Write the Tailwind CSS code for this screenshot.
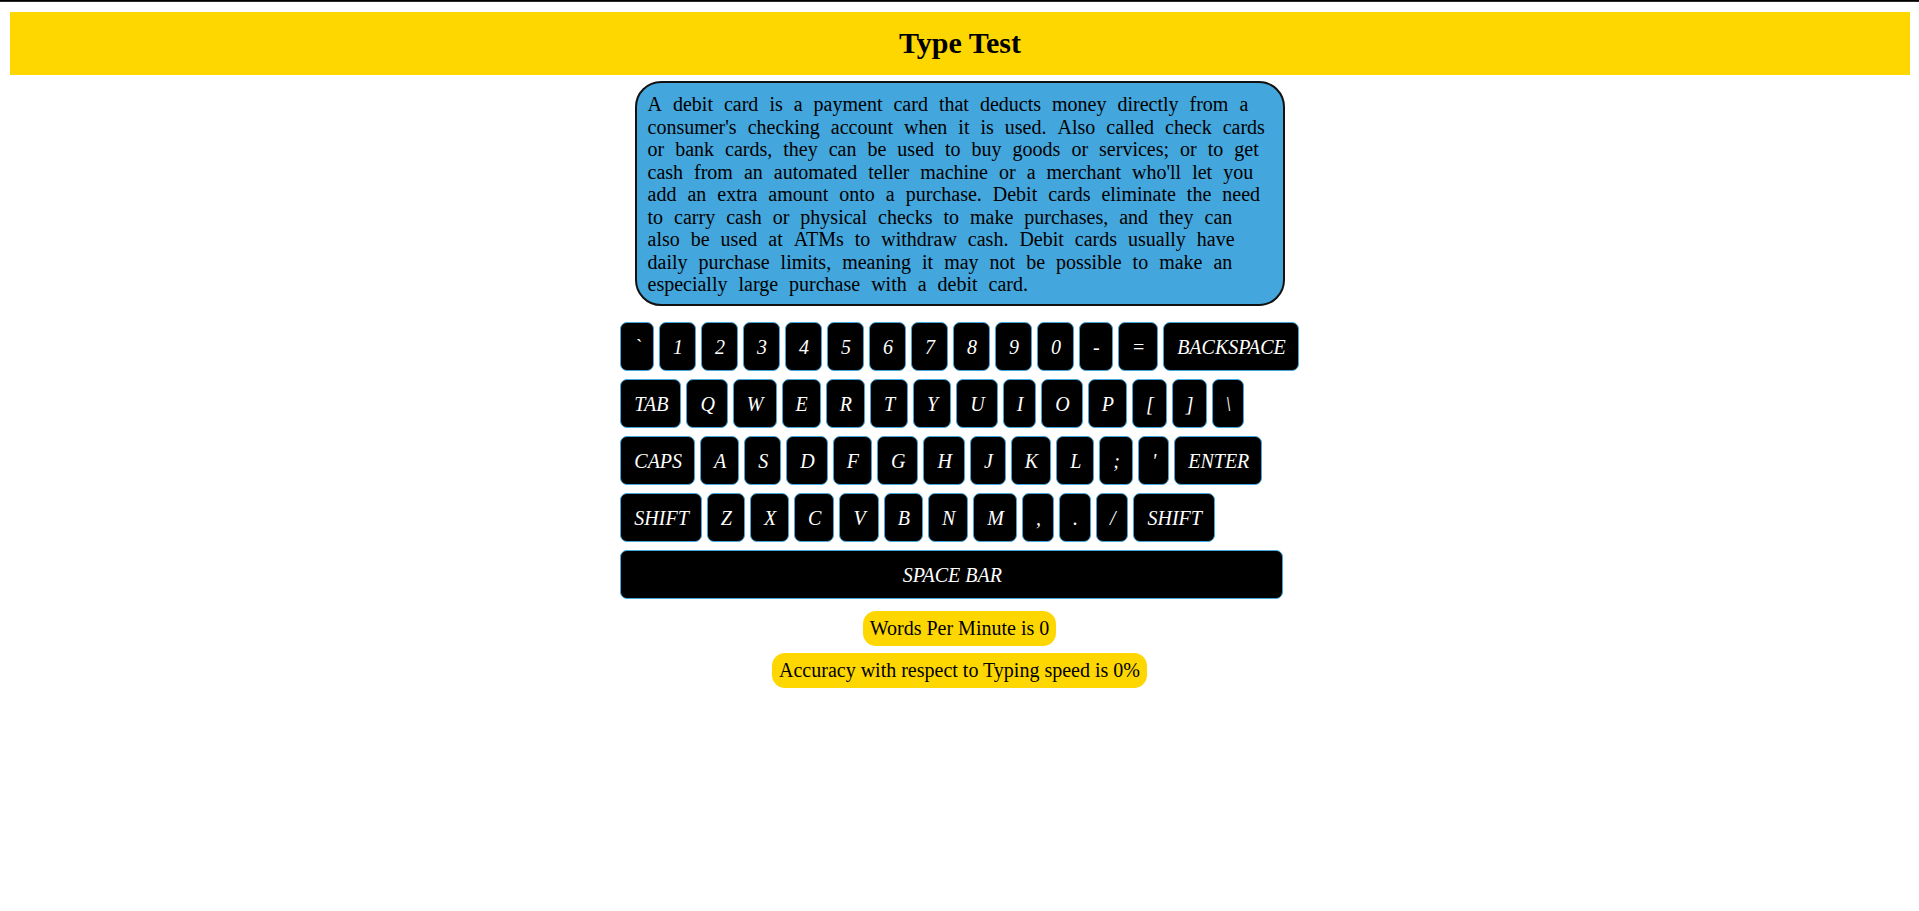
<!DOCTYPE html>
<html lang="en">
<head>
<meta charset="utf-8">
<meta name="viewport" content="width=device-width, initial-scale=1">
<title>Type Test</title>
<script src="https://cdn.jsdelivr.net/npm/@tailwindcss/browser@4"></script>
</head>
<body class="bg-white text-black font-['Liberation_Serif',serif] text-[20px] leading-[23px]">
<div class="h-0.5 border-b border-[#2b2629] bg-black"></div>
<header class="mt-[10px] mr-[9px] ml-[10px] bg-[#ffd700] pt-[13px] pb-[15px]">
  <h1 class="text-center text-[30px] leading-[35px] font-bold">Type Test</h1>
</header>
<main class="flex flex-col items-center">
  <p id="passage" class="mt-[6px] flex min-h-[225px] w-full max-w-[650px] flex-wrap content-between gap-x-[11px] rounded-[26px] border-2 border-[#111111] bg-[#43a6dc] pt-[10px] pr-[9px] pb-[9px] pl-[11px] leading-[22px]">A debit card is a payment card that deducts money directly from a consumer's checking account when it is used. Also called check cards or bank cards, they can be used to buy goods or services; or to get cash from an automated teller machine or a merchant who'll let you add an extra amount onto a purchase. Debit cards eliminate the need to carry cash or physical checks to make purchases, and they can also be used at ATMs to withdraw cash. Debit cards usually have daily purchase limits, meaning it may not be possible to make an especially large purchase with a debit card.</p>

  <div id="keyboard" class="mt-[16px] flex flex-col gap-2 text-white italic [&_button]:rounded-[7px] [&_button]:border [&_button]:border-[#43a6dc] [&_button]:bg-black [&_button]:pr-[12px] [&_button]:pl-[13px] [&_button]:pt-[13px] [&_button]:pb-[11px] [&>div]:flex [&>div]:gap-[5px]">
    <div><button type="button">`</button><button type="button">1</button><button type="button">2</button><button type="button">3</button><button type="button">4</button><button type="button">5</button><button type="button">6</button><button type="button">7</button><button type="button">8</button><button type="button">9</button><button type="button">0</button><button type="button">-</button><button type="button">=</button><button type="button">BACKSPACE</button></div>
    <div><button type="button">TAB</button><button type="button">Q</button><button type="button">W</button><button type="button">E</button><button type="button">R</button><button type="button">T</button><button type="button">Y</button><button type="button">U</button><button type="button">I</button><button type="button">O</button><button type="button">P</button><button type="button">[</button><button type="button">]</button><button type="button">\</button></div>
    <div><button type="button">CAPS</button><button type="button">A</button><button type="button">S</button><button type="button">D</button><button type="button">F</button><button type="button">G</button><button type="button">H</button><button type="button">J</button><button type="button">K</button><button type="button">L</button><button type="button">;</button><button type="button">'</button><button type="button">ENTER</button></div>
    <div><button type="button">SHIFT</button><button type="button">Z</button><button type="button">X</button><button type="button">C</button><button type="button">V</button><button type="button">B</button><button type="button">N</button><button type="button">M</button><button type="button">,</button><button type="button">.</button><button type="button">/</button><button type="button">SHIFT</button></div>
    <div><button type="button" class="w-[663px]">SPACE BAR</button></div>
  </div>

  <div class="mt-[12px] flex flex-col items-center gap-[7px]">
    <p class="rounded-[13px] bg-[#ffd700] px-[7px] py-[6px]">Words Per Minute is 0</p>
    <p class="rounded-[13px] bg-[#ffd700] px-[7px] py-[6px]">Accuracy with respect to Typing speed is 0%</p>
  </div>
</main>
<script>
  const passage = document.getElementById('passage');
  const words = passage.textContent.trim().split(/\s+/);
  passage.replaceChildren(...words.flatMap((word) => {
    const span = document.createElement('span');
    span.textContent = word;
    return [span, ' '];
  }));
</script>
</body>
</html>
